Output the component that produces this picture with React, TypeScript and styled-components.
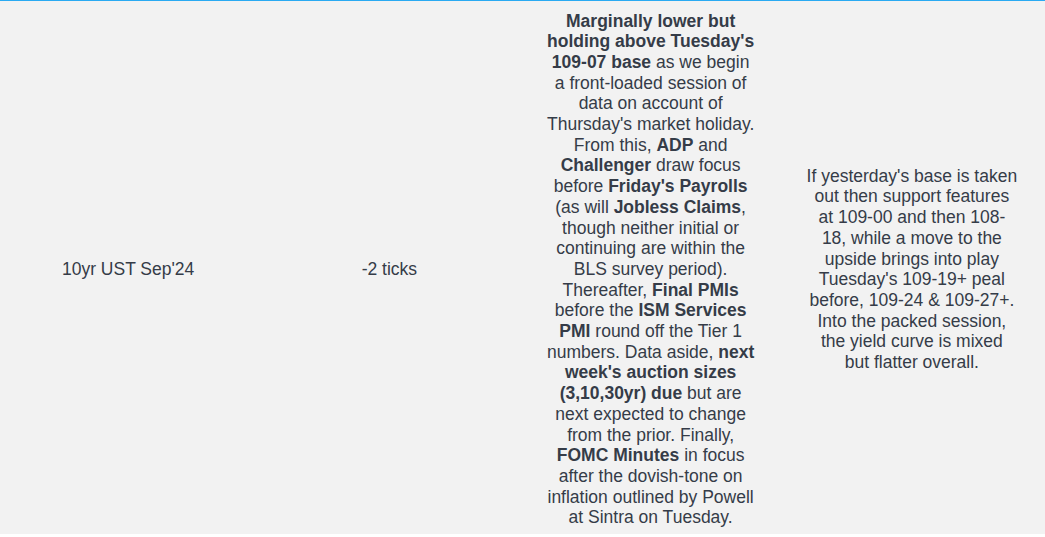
import React from "react";
import styled, { createGlobalStyle } from "styled-components";

const Global = createGlobalStyle`
  html, body { margin: 0; padding: 0; background: #ffffff; }
  body { font-family: "Liberation Sans", Arial, sans-serif; }
`;

const Table = styled.table`
  width: 100%;
  border-collapse: collapse;
  table-layout: fixed;
  background: #f2f2f2;
  border-top: 1px solid #2aaaf2;
`;

const Cell = styled.td`
  padding: 9.5px 13px 5.5px 8px;
  text-align: center;
  vertical-align: middle;
  white-space: nowrap;
  font-family: "Liberation Sans", Arial, sans-serif;
  font-size: 17.5px;
  line-height: 20.7px;
  color: #353c48;
`;

const B = styled.b`
  font-weight: 700;
`;

export default function App() {
  return (
    <>
      <Global />
      <Table>
        <tbody>
          <tr>
            <Cell>10yr UST Sep'24</Cell>
            <Cell>-2 ticks</Cell>
            <Cell>
              <B>Marginally lower but</B>
              <br />
              <B>holding above Tuesday's</B>
              <br />
              <B>109-07 base</B> as we begin
              <br />
              a front-loaded session of
              <br />
              data on account of
              <br />
              Thursday's market holiday.
              <br />
              From this, <B>ADP</B> and
              <br />
              <B>Challenger</B> draw focus
              <br />
              before <B>Friday's Payrolls</B>
              <br />
              (as will <B>Jobless Claims</B>,
              <br />
              though neither initial or
              <br />
              continuing are within the
              <br />
              BLS survey period).
              <br />
              Thereafter, <B>Final PMIs</B>
              <br />
              before the <B>ISM Services</B>
              <br />
              <B>PMI</B> round off the Tier 1
              <br />
              numbers. Data aside, <B>next</B>
              <br />
              <B>week's auction sizes</B>
              <br />
              <B>(3,10,30yr) due</B> but are
              <br />
              next expected to change
              <br />
              from the prior. Finally,
              <br />
              <B>FOMC Minutes</B> in focus
              <br />
              after the dovish-tone on
              <br />
              inflation outlined by Powell
              <br />
              at Sintra on Tuesday.
            </Cell>
            <Cell>
              If yesterday's base is taken
              <br />
              out then support features
              <br />
              at 109-00 and then 108-
              <br />
              18, while a move to the
              <br />
              upside brings into play
              <br />
              Tuesday's 109-19+ peal
              <br />
              before, 109-24 &amp; 109-27+.
              <br />
              Into the packed session,
              <br />
              the yield curve is mixed
              <br />
              but flatter overall.
            </Cell>
          </tr>
        </tbody>
      </Table>
    </>
  );
}
